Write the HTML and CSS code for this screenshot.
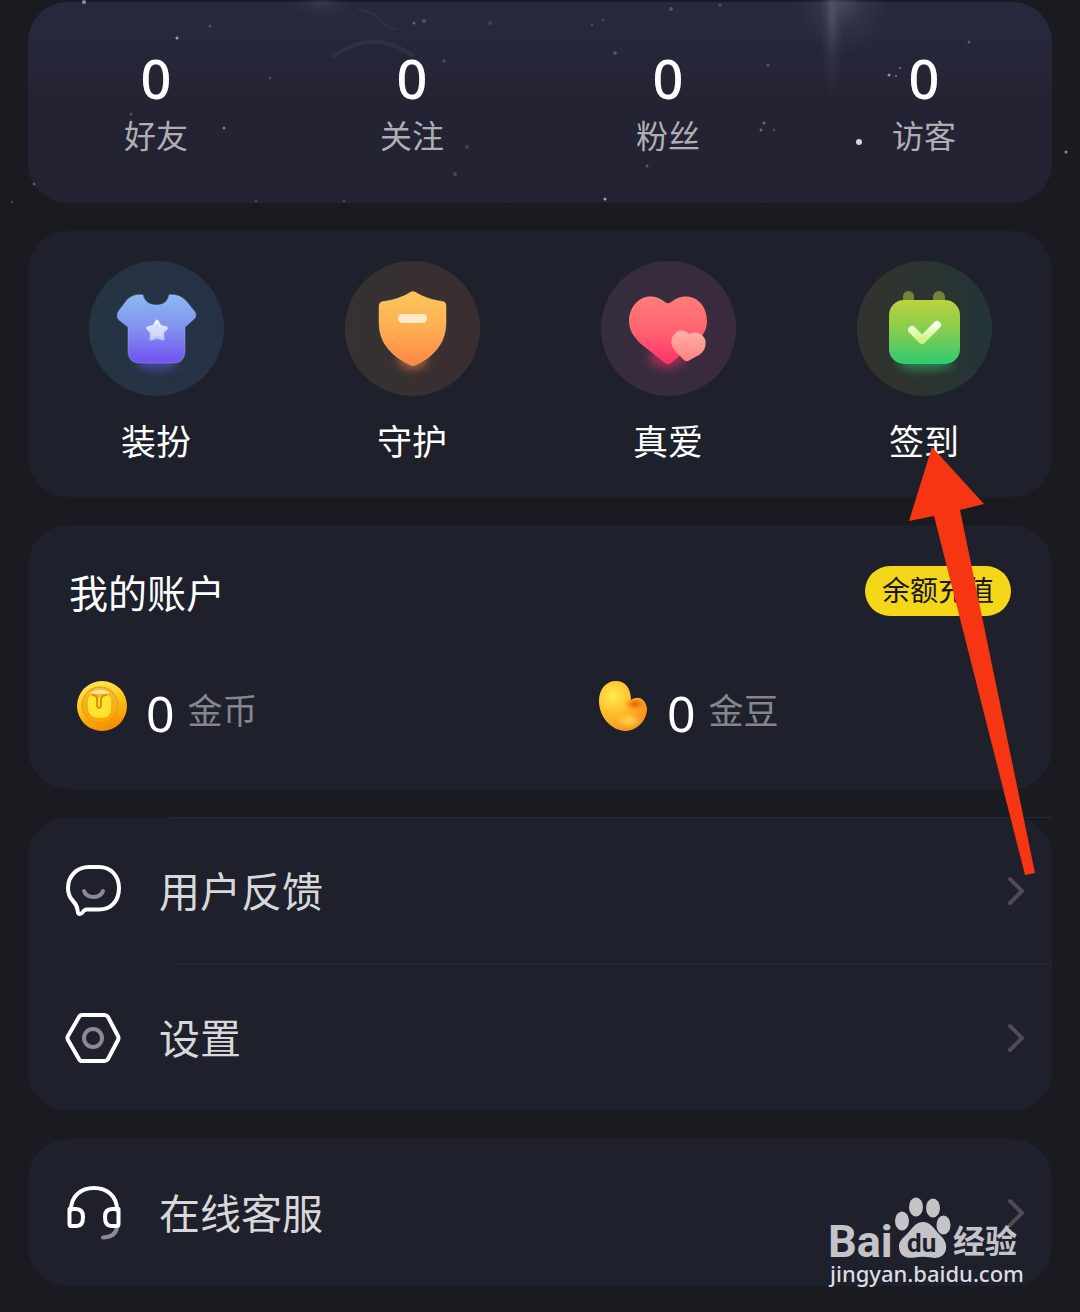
FILE: index.html
```html
<!DOCTYPE html>
<html lang="zh-CN">
<head>
  <meta charset="UTF-8">
  <meta name="viewport" content="width=device-width, initial-scale=1">
  <title>我的</title>
  <link rel="stylesheet" href="styles.css">
</head>
<body>
  <main class="page">
    <svg class="stars" viewBox="0 0 1080 210" preserveAspectRatio="xMidYMin slice" aria-hidden="true">
      <defs>
        <radialGradient id="glow"><stop offset="0" stop-color="#8b8ba0" stop-opacity=".3"/><stop offset=".5" stop-color="#8b8ba0" stop-opacity=".09"/><stop offset="1" stop-color="#8b8ba0" stop-opacity="0"/></radialGradient>
      </defs>
      <ellipse cx="842" cy="0" rx="46" ry="56" fill="url(#glow)"/>
      <ellipse cx="832" cy="16" rx="12" ry="84" fill="url(#glow)"/>
      <ellipse cx="322" cy="2" rx="32" ry="16" fill="url(#glow)" opacity=".6"/>
      <path d="M334 56Q372 28 412 55" fill="none" stroke="#77778c" stroke-opacity=".13" stroke-width="4" stroke-linecap="round"/>
      <path d="M358 9q18 4 24 12t14 8" fill="none" stroke="#77778c" stroke-opacity=".12" stroke-width="2"/>
      <g fill="#d5d5e4">
        <circle cx="859" cy="142" r="3"/>
        <circle cx="177" cy="38" r="1.5" opacity=".7"/>
        <circle cx="84" cy="2" r="2" opacity=".6"/>
        <circle cx="224" cy="128" r="1.5" opacity=".5"/>
        <circle cx="605" cy="199" r="1.5" opacity=".7"/>
        <circle cx="1066" cy="152" r="1.5" opacity=".6"/>
        <circle cx="889" cy="75" r="1.5" opacity=".6"/>
        <circle cx="896" cy="76" r="1" opacity=".5"/>
        <circle cx="900" cy="68" r="1" opacity=".5"/>
        <circle cx="764" cy="123" r="1.5" opacity=".4"/>
        <circle cx="761" cy="130" r="1.5" opacity=".4"/>
        <circle cx="774" cy="130" r="1" opacity=".3"/>
        <circle cx="768" cy="65" r="1.5" opacity=".3"/>
        <circle cx="615" cy="53" r="2" opacity=".25"/>
        <circle cx="671" cy="9" r="2" opacity=".25"/>
        <circle cx="720" cy="5" r="1.5" opacity=".25"/>
        <circle cx="603" cy="20" r="1" opacity=".3"/>
        <circle cx="592" cy="25" r="1" opacity=".3"/>
        <circle cx="647" cy="166" r="1.5" opacity=".3"/>
        <circle cx="969" cy="42" r="1.5" opacity=".3"/>
        <circle cx="414" cy="23" r="1.5" opacity=".35"/>
        <circle cx="424" cy="21" r="2" opacity=".25"/>
        <circle cx="444" cy="61" r="1.5" opacity=".25"/>
        <circle cx="490" cy="23" r="2" opacity=".15"/>
        <circle cx="455" cy="174" r="2" opacity=".2"/>
        <circle cx="467" cy="147" r="2" opacity=".15"/>
        <circle cx="270" cy="78" r="1.5" opacity=".2"/>
        <circle cx="210" cy="26" r="1.5" opacity=".25"/>
        <circle cx="131" cy="114" r="1.5" opacity=".25"/>
        <circle cx="34" cy="184" r="1.5" opacity=".3"/>
        <circle cx="12" cy="202" r="1" opacity=".3"/>
        <circle cx="256" cy="201" r="1.5" opacity=".2"/>
        <circle cx="344" cy="201" r="1.5" opacity=".2"/>
      </g>
    </svg>

    <nav class="card stats">
      <a class="stat" href="#friends"><strong>0</strong><span>好友</span></a>
      <a class="stat" href="#following"><strong>0</strong><span>关注</span></a>
      <a class="stat" href="#fans"><strong>0</strong><span>粉丝</span></a>
      <a class="stat" href="#visitors"><strong>0</strong><span>访客</span></a>
    </nav>

    <nav class="card shortcuts">
      <a class="shortcut" href="#dress">
        <svg class="shortcut-icon" viewBox="0 0 135 135" aria-hidden="true">
          <defs>
            <linearGradient id="dressBg"><stop offset="0" stop-color="#243440"/><stop offset="1" stop-color="#263147"/></linearGradient>
            <linearGradient id="shirt" x2="0" y2="1"><stop offset="0" stop-color="#8cb9f5"/><stop offset=".5" stop-color="#8190ee"/><stop offset="1" stop-color="#7052f2"/></linearGradient>
            <linearGradient id="star" x2="0" y2="1"><stop offset="0" stop-color="#f0f3ff"/><stop offset="1" stop-color="#bcc3fb"/></linearGradient>
            <filter id="soft" x="-50%" y="-100%" width="200%" height="300%"><feGaussianBlur stdDeviation="5"/></filter>
          </defs>
          <circle cx="67.5" cy="67.5" r="67.5" fill="url(#dressBg)"/>
          <ellipse cx="68" cy="101" rx="20" ry="8" fill="#6d5cf0" opacity=".5" filter="url(#soft)"/>
          <path d="M54 34C55 40 60 44 67.500 44S79 40 80 34C88 33 93 36 97 40L106 51Q108 55 105 58L96 66V89Q96 102 84 102H51Q39 102 39 89V66L30 59Q27 56 29 51L38 39C42 35 47 33 54 34Z" fill="url(#shirt)" stroke="#a9c8ff" stroke-opacity=".25" stroke-width="1.500"/>
          <path d="M68 60L71.300 65.500L77.500 67L73.500 71.500L74 78L68 76L62 78L62.500 71.500L58.500 67L64.700 65.500Z" fill="#d6dcfd" stroke="url(#star)" stroke-width="3" stroke-linejoin="round"/>
        </svg>
        <span>装扮</span>
      </a>
      <a class="shortcut" href="#guard">
        <svg class="shortcut-icon" viewBox="0 0 135 135" aria-hidden="true">
          <defs>
            <linearGradient id="guardBg"><stop offset="0" stop-color="#353231"/><stop offset="1" stop-color="#3a2d31"/></linearGradient>
            <linearGradient id="shield" x2="0" y2="1"><stop offset="0" stop-color="#fac85c"/><stop offset=".5" stop-color="#ffad52"/><stop offset="1" stop-color="#ff8644"/></linearGradient>
          </defs>
          <circle cx="67.5" cy="67.5" r="67.5" fill="url(#guardBg)"/>
          <ellipse cx="68" cy="99" rx="14" ry="9" fill="#ff8a3e" opacity=".6" filter="url(#soft)"/>
          <path d="M65 31.500Q68 29.500 71 31.500C80 37 88 39 98 40.500Q101 41 101 45V62C101 83 87 97 70 104Q68 105 66 104C49 97 34 83 34 62V45Q34 41 38 40.500C48 39 56 37 65 31.500Z" fill="url(#shield)" stroke="#ffd875" stroke-opacity=".4" stroke-width="1"/>
          <rect x="53" y="53" width="29" height="9" rx="4.5" fill="#ffebca"/>
        </svg>
        <span>守护</span>
      </a>
      <a class="shortcut" href="#love">
        <svg class="shortcut-icon" viewBox="0 0 135 135" aria-hidden="true">
          <defs>
            <linearGradient id="loveBg"><stop offset="0" stop-color="#352d3e"/><stop offset="1" stop-color="#3b2a3e"/></linearGradient>
            <linearGradient id="heart" x2="0" y2="1"><stop offset="0" stop-color="#ff7d78"/><stop offset=".5" stop-color="#ff6470"/><stop offset="1" stop-color="#ff3268"/></linearGradient>
            <linearGradient id="heartSmall" x2="0" y2="1"><stop offset="0" stop-color="#ffb0a9"/><stop offset="1" stop-color="#ff837f"/></linearGradient>
          </defs>
          <circle cx="67.5" cy="67.5" r="67.5" fill="url(#loveBg)"/>
          <ellipse cx="66" cy="97" rx="18" ry="10" fill="#ff3268" opacity=".5" filter="url(#soft)"/>
          <path d="M64 41Q67 43.500 70 41C76 36 82 35 87 35.500C99 37 106 48 106 60C106 71 100 77 92 84L70 102Q67 104.500 64 102L40 83C33 76 28 70 28 60C28 48 36 37 47 35.500C53 35 58 36 64 41Z" fill="url(#heart)"/>
          <path d="M88 73C94 70 101 72 104 78C106 85 103 91 98 94L87 100Q85 101 83 99L75 91C70 86 69 80 72 75C76 68 84 68 88 73Z" fill="url(#heartSmall)"/>
        </svg>
        <span>真爱</span>
      </a>
      <a class="shortcut" href="#checkin">
        <svg class="shortcut-icon" viewBox="0 0 135 135" aria-hidden="true">
          <defs>
            <linearGradient id="checkBg"><stop offset="0" stop-color="#32332e"/><stop offset=".5" stop-color="#2c342f"/><stop offset="1" stop-color="#223538"/></linearGradient>
            <linearGradient id="calendar" x2="0" y2="1"><stop offset="0" stop-color="#bbd33c"/><stop offset=".5" stop-color="#82cc50"/><stop offset="1" stop-color="#2fcb72"/></linearGradient>
            <linearGradient id="tick" x2="0" y2="1"><stop offset="0" stop-color="#f5ffec"/><stop offset="1" stop-color="#ccf57e"/></linearGradient>
          </defs>
          <circle cx="67.5" cy="67.5" r="67.5" fill="url(#checkBg)"/>
          <ellipse cx="68" cy="102" rx="28" ry="7" fill="#2fcb72" opacity=".5" filter="url(#soft)"/>
          <rect x="46" y="30" width="11" height="22" rx="5.500" fill="#738436"/>
          <rect x="76" y="30" width="12" height="22" rx="6" fill="#738436"/>
          <rect x="32" y="39" width="71" height="64" rx="15" fill="url(#calendar)"/>
          <path d="M55 69L65 79L80 64" fill="none" stroke="url(#tick)" stroke-width="8" stroke-linecap="round" stroke-linejoin="round"/>
        </svg>
        <span>签到</span>
      </a>
    </nav>

    <section class="card account">
      <header class="account-header">
        <h2>我的账户</h2>
        <button class="recharge" type="button">余额充值</button>
      </header>
      <div class="balances">
        <div class="balance">
          <svg class="balance-icon" viewBox="0 0 50 50" aria-hidden="true">
            <defs>
              <linearGradient id="coin" x2="0.300" y2="1"><stop offset="0" stop-color="#ffef62"/><stop offset=".5" stop-color="#ffc91c"/><stop offset="1" stop-color="#f79200"/></linearGradient>
              <linearGradient id="coinIn" x2="0" y2="1"><stop offset="0" stop-color="#f4bd35"/><stop offset="1" stop-color="#ffa200"/></linearGradient>
            </defs>
            <circle cx="25" cy="25" r="25" fill="url(#coin)"/>
            <circle cx="23" cy="24" r="18" fill="url(#coinIn)" stroke="#e09a14" stroke-width="1"/>
            <path d="M13 12Q23 5 33 12Q23 14 13 12Z" fill="#ffe79b"/>
            <path d="M11 19Q11 14 17 14Q21 14 22 18Q23 14 28 14Q34 14 34 19V28Q34 37 23 37T11 28Z" fill="#ffe52c"/>
            <path d="M15 14Q20 14 20 18V25Q22 29 24 25V19Q24 14 30 14" fill="none" stroke="#d9920f" stroke-width="2"/>
          </svg>
          <strong>0</strong><span>金币</span>
        </div>
        <div class="balance">
          <svg class="balance-icon" viewBox="0 0 50 50" aria-hidden="true">
            <defs>
              <radialGradient id="bean" cx=".3" cy=".3" r=".75"><stop offset="0" stop-color="#ffed52"/><stop offset=".45" stop-color="#ffc02c"/><stop offset="1" stop-color="#f8921d"/></radialGradient>
              <radialGradient id="beanDark"><stop offset="0" stop-color="#e85a00"/><stop offset="1" stop-color="#f07c0a" stop-opacity="0"/></radialGradient>
              <radialGradient id="beanLight"><stop offset="0" stop-color="#ffdc57" stop-opacity=".9"/><stop offset="1" stop-color="#ffdc57" stop-opacity="0"/></radialGradient>
              <clipPath id="beanShape"><path d="M18 0C27 0 33 7 33 19C37 16 42 16 45 19C48 22 49 25 49 29C48 41 38 50 27 50C13 49 1 36 1 20C1 8 8 0 18 0Z"/></clipPath>
            </defs>
            <g clip-path="url(#beanShape)">
              <rect width="50" height="50" fill="url(#bean)"/>
              <ellipse cx="37" cy="23" rx="11" ry="7" fill="url(#beanDark)"/>
              <ellipse cx="31" cy="40" rx="13" ry="8" fill="url(#beanLight)"/>
            </g>
          </svg>
          <strong>0</strong><span>金豆</span>
        </div>
      </div>
    </section>

    <nav class="card menu">
      <a class="menu-item" href="#feedback">
        <svg class="menu-icon" viewBox="0 0 56 56" aria-hidden="true">
          <path d="M24 4H34C46 4 54 13 54 25C54 38 46 46.500 34 46.500H21Q19 47 17 50Q13 53 12.500 47Q12 42 8 38C4 34 3 30 3 25C3 13 12 4 24 4Z"/>
          <path class="dim" d="M19 28C22 36 35 36 38 28"/>
        </svg>
        <span>用户反馈</span>
        <svg class="chevron" viewBox="0 0 18 30" aria-hidden="true"><path d="M3 3L15 15L3 27"/></svg>
      </a>
      <a class="menu-item" href="#settings">
        <svg class="menu-icon" viewBox="0 0 56 56" aria-hidden="true">
          <path d="M17 5H39.500Q41.500 5 43 7L53 26Q54 28 53 30L43 49Q41.500 51 39.500 51H17Q15 51 14 49L3 30Q2 28 3 26L14 7Q15 5 17 5Z"/>
          <circle class="dim" cx="28" cy="28" r="9"/>
        </svg>
        <span>设置</span>
        <svg class="chevron" viewBox="0 0 18 30" aria-hidden="true"><path d="M3 3L15 15L3 27"/></svg>
      </a>
    </nav>

    <nav class="card">
      <a class="menu-item" href="#service">
        <svg class="menu-icon" viewBox="0 0 56 56" aria-hidden="true">
          <path class="dim" d="M52 42Q51 52 38 52.500"/>
          <path d="M6 25C6 11 16 3 29 3S52 11 52 25"/>
          <path d="M5 24H11Q18 24 18 32Q18 41 12 41H6Q4.500 41 4.500 39V24ZM53.500 24H47Q40 24 40 32Q40 41 46 41H52Q53.500 41 53.500 39Z"/>
        </svg>
        <span>在线客服</span>
        <svg class="chevron" viewBox="0 0 18 30" aria-hidden="true"><path d="M3 3L15 15L3 27"/></svg>
      </a>
    </nav>

    <svg class="pointer" viewBox="0 0 126 428" aria-hidden="true">
      <path d="M23 0L75 57L51 63L126 426L116 428L25 69L0 74Z"/>
    </svg>

    <svg class="watermark" viewBox="0 0 200 98" role="img" aria-label="百度经验">
      <text class="wm-brand" x="2" y="63">Bai</text>
      <ellipse cx="76" cy="27" rx="7" ry="9.500"/>
      <ellipse cx="90" cy="13" rx="7" ry="9.500"/>
      <ellipse cx="107" cy="14" rx="7" ry="9.500"/>
      <ellipse cx="117.500" cy="31" rx="7" ry="9.500"/>
      <path d="M97 28C105 28 108 35 113 40C118 45 121 49 120 55C119 62 113 65 105 63.500Q97 62 89 63.500C80 65 74 62 73 54C72 48 77 44 81 40C86 35 89 28 97 28Z"/>
      <text class="wm-du" x="81" y="58">du</text>
      <text class="wm-cn" x="127" y="59">经验</text>
      <text class="wm-url" x="4" y="88">jingyan.baidu.com</text>
    </svg>
  </main>
</body>
</html>
```

FILE: styles.css
```css
* { box-sizing: border-box; }
body {
  margin: 0;
  background-color: #1a1a21;
  color: #fff;
  font-family: Roboto, "Noto Sans CJK SC", sans-serif;
}
a { color: inherit; text-decoration: none; }
svg { display: block; flex: none; }

.page {
  position: relative;
  display: flex;
  flex-direction: column;
  gap: 28px;
  padding: 2px 28px 26px;
}
.card {
  border-radius: 40px;
  background-color: #1e202c;
}

/* night sky behind the counters */
.stars {
  position: absolute;
  top: 0;
  left: 0;
  width: 100%;
  height: 210px;
  pointer-events: none;
  z-index: 1;
}

.stats {
  display: grid;
  grid-template-columns: repeat(4, 1fr);
  padding: 46px 0;
  background: linear-gradient(#272a3e, #242334 50%, #232230);
}
.stat {
  display: flex;
  flex-direction: column;
  align-items: center;
  gap: 9px;
}
.stat strong, .balance strong { font-family: "Noto Sans", sans-serif; }
.stat strong { font-size: 54px; font-weight: 500; line-height: 60px; }
.stat span { font-size: 32px; line-height: 40px; color: #b0aeb5; }

.shortcuts {
  display: grid;
  grid-template-columns: repeat(4, 1fr);
  padding: 30px 0 31px;
}
.shortcut {
  display: flex;
  flex-direction: column;
  align-items: center;
  gap: 26px;
  font-size: 35px;
  line-height: 44px;
}
.shortcut-icon { width: 135px; height: 135px; }

.account { padding: 41px 41px 44px; }
.account-header {
  display: flex;
  justify-content: space-between;
  align-items: flex-start;
}
.account h2 {
  margin: 0;
  font-size: 39px;
  font-weight: 400;
  line-height: 58px;
}
.recharge {
  height: 50px;
  padding: 2px 17px 0;
  border: 0;
  border-radius: 25px;
  background-color: #f3d718;
  color: #17171c;
  font-family: inherit;
  font-size: 28px;
  line-height: 48px;
}
.balances {
  display: grid;
  grid-template-columns: repeat(2, 1fr);
  column-gap: 108px;
  margin-top: 57px;
  padding-left: 8px;
}
.balance {
  display: flex;
  line-height: 64px;
}
.balance-icon { width: 50px; height: 50px; margin-right: 19px; }
.balance strong { margin-right: 13px; font-size: 50px; font-weight: 400; }
.balance span { font-size: 35px; color: #85858e; }

.menu-item {
  display: flex;
  align-items: center;
  height: 147px;
  padding: 0 27px 0 37px;
  font-size: 41px;
  color: #d8d8da;
}
.menu-item span { margin-bottom: 4px; }
/* divider starts at the text, not at the icon */
.menu .menu-item {
  background: linear-gradient(#272934, #272934) 145px 0 / 100% 1px no-repeat;
}
.menu-icon {
  width: 56px;
  height: 56px;
  margin-right: 38px;
  fill: none;
  stroke: #fff;
  stroke-width: 4;
  stroke-linecap: round;
  stroke-linejoin: round;
}
.menu-icon .dim { stroke: #8a8a95; }
.chevron {
  width: 18px;
  height: 30px;
  margin-left: auto;
  fill: none;
  stroke: #4b4c56;
  stroke-width: 4;
  stroke-linecap: round;
}

.pointer {
  position: absolute;
  top: 447px;
  right: 45px;
  width: 126px;
  height: 428px;
  fill: #f63512;
  pointer-events: none;
}

.watermark {
  position: absolute;
  right: 54px;
  bottom: 20px;
  width: 200px;
  height: 98px;
  fill: #c3c3c8;
  pointer-events: none;
}
.wm-brand { font-size: 45px; font-weight: 700; }
.wm-du { font-size: 26px; font-weight: 700; fill: #1e202c; }
.wm-cn { font-size: 32px; font-weight: 700; }
.wm-url { font-family: "Noto Sans", sans-serif; font-size: 22px; font-weight: 500; fill: #dcdce0; }
```
